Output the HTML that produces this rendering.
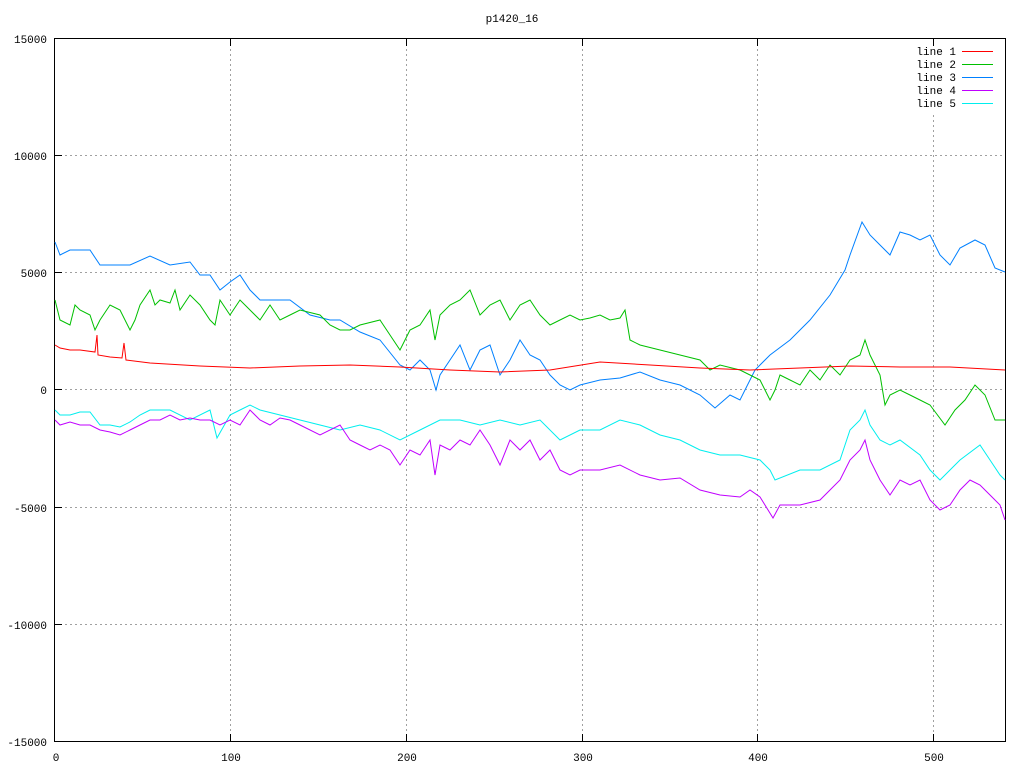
<!DOCTYPE html><html><head><meta charset="utf-8"><style>body{margin:0;background:#fff}svg{display:block}text{font-family:"Liberation Mono","DejaVu Sans Mono",monospace;font-size:11px;fill:#000}</style></head><body>
<svg width="1024" height="768" xmlns="http://www.w3.org/2000/svg">
<rect width="1024" height="768" fill="#fff"/>
<g stroke="#a0a0a0" stroke-dasharray="2,3" stroke-width="1">
<line x1="55" y1="155.5" x2="1005" y2="155.5"/><line x1="55" y1="272.5" x2="1005" y2="272.5"/><line x1="55" y1="389.5" x2="1005" y2="389.5"/><line x1="55" y1="507.5" x2="1005" y2="507.5"/><line x1="55" y1="624.5" x2="1005" y2="624.5"/>
<line x1="230.5" y1="39" x2="230.5" y2="741"/><line x1="406.5" y1="39" x2="406.5" y2="741"/><line x1="582.5" y1="39" x2="582.5" y2="741"/><line x1="757.5" y1="39" x2="757.5" y2="741"/><line x1="933.5" y1="115" x2="933.5" y2="741"/>
</g>
<rect x="54.5" y="38.5" width="951" height="703" fill="none" stroke="#000"/>
<g stroke="#000"><line x1="55" y1="155.5" x2="62" y2="155.5"/><line x1="55" y1="272.5" x2="62" y2="272.5"/><line x1="55" y1="389.5" x2="62" y2="389.5"/><line x1="55" y1="507.5" x2="62" y2="507.5"/><line x1="55" y1="624.5" x2="62" y2="624.5"/>
<line x1="230.5" y1="39" x2="230.5" y2="46"/><line x1="230.5" y1="741" x2="230.5" y2="734"/><line x1="406.5" y1="39" x2="406.5" y2="46"/><line x1="406.5" y1="741" x2="406.5" y2="734"/><line x1="582.5" y1="39" x2="582.5" y2="46"/><line x1="582.5" y1="741" x2="582.5" y2="734"/><line x1="757.5" y1="39" x2="757.5" y2="46"/><line x1="757.5" y1="741" x2="757.5" y2="734"/><line x1="933.5" y1="39" x2="933.5" y2="46"/><line x1="933.5" y1="741" x2="933.5" y2="734"/></g>
<text x="512" y="22" text-anchor="middle">p1420_16</text>
<g text-anchor="end"><text x="47" y="43">15000</text><text x="47" y="160">10000</text><text x="47" y="277">5000</text><text x="47" y="394">0</text><text x="47" y="512">-5000</text><text x="47" y="629">-10000</text><text x="47" y="746">-15000</text></g>
<g text-anchor="middle"><text x="56" y="761">0</text><text x="231" y="761">100</text><text x="407" y="761">200</text><text x="583" y="761">300</text><text x="758" y="761">400</text><text x="934" y="761">500</text></g>
<g text-anchor="end"><text x="956" y="55">line 1</text><text x="956" y="68">line 2</text><text x="956" y="81">line 3</text><text x="956" y="94">line 4</text><text x="956" y="107">line 5</text></g>
<g stroke-width="1" shape-rendering="crispEdges"><line x1="962" y1="51.5" x2="993" y2="51.5" stroke="#ff0000"/><line x1="962" y1="64.5" x2="993" y2="64.5" stroke="#00c000"/><line x1="962" y1="77.5" x2="993" y2="77.5" stroke="#0080ff"/><line x1="962" y1="90.5" x2="993" y2="90.5" stroke="#c000ff"/><line x1="962" y1="103.5" x2="993" y2="103.5" stroke="#00eeee"/></g>
<g fill="none" stroke-width="1">
<polyline stroke="#0080ff" points="55,242 60,255 70,250 90,250 100,265 130,265 150,256 170,265 190,262 200,275 210,275 220,290 230,282 240,275 250,290 260,300 270,300 290,300 310,315 330,320 340,320 360,332 380,340 400,365 410,370 420,360 430,370 436,390 440,375 450,360 460,345 470,370 480,350 490,345 500,375 510,360 520,340 530,355 540,360 550,375 560,385 570,390 580,385 600,380 620,378 640,372 660,380 680,385 700,395 715,408 730,395 740,400 755,370 770,355 790,340 810,320 830,295 845,270 850,255 862,222 870,235 880,245 890,255 900,232 910,235 920,240 930,235 940,255 950,265 960,248 975,240 985,245 995,268 1005,272"/>
<polyline stroke="#00c000" points="55,300 60,320 70,325 75,305 80,310 90,315 95,330 100,320 110,305 120,310 130,330 135,320 140,305 150,290 155,305 160,300 170,303 175,290 180,310 190,295 200,305 210,320 215,325 220,300 230,315 240,300 250,310 260,320 270,305 280,320 290,315 300,310 320,315 330,325 340,330 350,330 360,325 380,320 400,350 410,330 420,325 430,310 435,340 440,315 450,305 460,300 470,290 480,315 490,305 500,300 510,320 520,305 530,300 540,315 550,325 560,320 570,315 580,320 590,318 600,315 610,320 620,318 625,310 630,340 640,345 660,350 680,355 700,360 710,370 720,365 740,370 750,375 760,380 770,400 775,390 780,375 790,380 800,385 810,370 820,380 830,365 840,375 850,360 860,355 865,340 870,355 880,375 885,405 890,395 900,390 910,395 920,400 930,405 945,425 955,410 965,400 975,385 985,395 995,420 1005,420"/>
<polyline stroke="#ff0000" points="55,345 60,348 70,350 80,350 95,352 97,335 98,355 110,357 122,358 124,343 126,360 150,363 200,366 250,368 300,366 350,365 400,367 450,370 500,372 550,370 600,362 650,365 700,368 750,370 800,368 850,366 900,367 950,367 1005,370"/>
<polyline stroke="#00eeee" points="55,410 60,415 70,415 80,412 90,412 100,425 110,425 120,427 130,422 140,415 150,410 170,410 190,420 210,410 217,438 230,415 240,410 250,405 260,410 280,415 300,420 320,425 340,430 360,425 380,430 400,440 420,430 440,420 460,420 480,425 500,420 520,425 540,420 560,440 580,430 600,430 620,420 640,425 660,435 680,440 700,450 720,455 740,455 760,460 770,470 775,480 800,470 820,470 840,460 850,430 860,420 865,410 870,425 880,440 890,445 900,440 920,455 930,470 940,480 950,470 960,460 980,445 990,460 1000,475 1005,480"/>
<polyline stroke="#c000ff" points="55,420 60,425 70,422 80,425 90,425 100,430 110,432 120,435 130,430 140,425 150,420 160,420 170,415 180,420 190,418 200,420 210,420 220,425 230,420 240,425 250,410 260,420 270,425 280,418 290,420 300,425 320,435 340,425 350,440 360,445 370,450 380,445 390,450 400,465 410,450 420,455 430,440 435,475 440,445 450,450 460,440 470,445 480,430 490,445 500,465 510,440 520,450 530,440 540,460 550,450 560,470 570,475 580,470 600,470 620,465 640,475 660,480 680,478 700,490 720,495 740,497 750,490 760,497 773,518 780,505 800,505 820,500 830,490 840,480 850,460 860,450 865,440 870,460 880,480 890,495 900,480 910,485 920,480 930,500 940,510 950,505 960,490 970,480 980,485 990,495 1000,505 1005,520"/>
</g>
</svg>
</body></html>
